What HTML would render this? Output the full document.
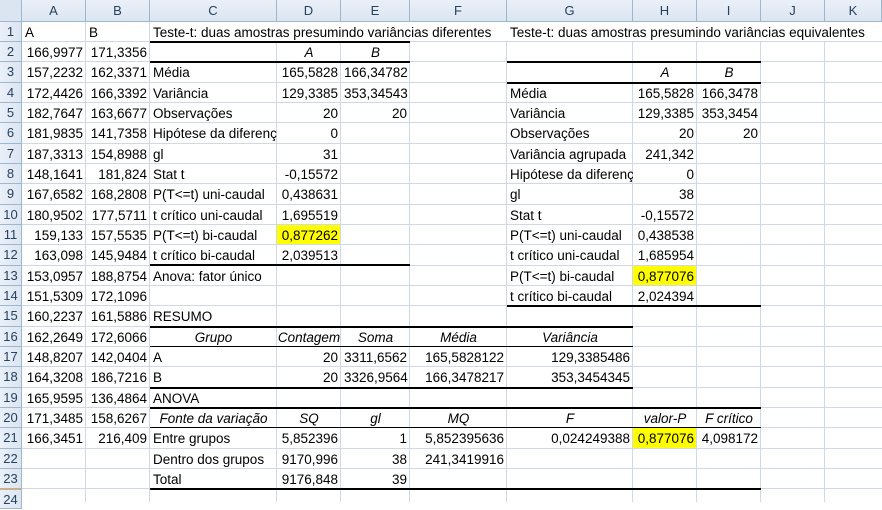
<!DOCTYPE html>
<html><head><meta charset="utf-8"><style>
body{margin:0;width:882px;height:502px;overflow:hidden;background:#fff;position:relative;font-family:"Liberation Sans",sans-serif;font-size:13.5px;color:#000}
div{position:absolute;box-sizing:border-box}
.gv{width:1px;top:0;height:502px;background:#d0d7e5}
.gh{height:1px;left:0;width:882px;background:#d0d7e5}
.hd{top:0;height:22px;background:linear-gradient(#eaf0f9,#dbe5f1);border-right:1px solid #9eb6ce;border-bottom:1px solid #9eb6ce;text-align:center;line-height:22px;color:#27415f;font-size:13px}
.rh{left:0;width:22px;background:linear-gradient(90deg,#eaf0f9,#dbe5f1);border-right:1px solid #9eb6ce;border-bottom:1px solid #9eb6ce;text-align:center;line-height:20px;color:#27415f;font-size:13px}
.c{height:20px;line-height:22px;padding:0 3px;white-space:nowrap;overflow:hidden}
.v{overflow:visible}
.R{text-align:right}.C{text-align:center}.i{font-style:italic}
.y{background:#ffff00;height:19px;margin-top:0}
.tk{height:2px;background:#000}.tn{height:1px;background:#000}
.cA{left:22px;width:64px}.cB{left:86px;width:64px}.cC{left:150px;width:127px}.cD{left:277px;width:64px}.cE{left:341px;width:69px}.cF{left:410px;width:97px}.cG{left:507px;width:126px}.cH{left:633px;width:64px}.cI{left:697px;width:64px}
</style></head><body>
<div class="gv" style="left:21px"></div><div class="gv" style="left:85px"></div><div class="gv" style="left:149px"></div><div class="gv" style="left:276px"></div><div class="gv" style="left:340px"></div><div class="gv" style="left:409px"></div><div class="gv" style="left:506px"></div><div class="gv" style="left:632px"></div><div class="gv" style="left:696px"></div><div class="gv" style="left:760px"></div><div class="gv" style="left:824px"></div>
<div class="gh" style="top:41px"></div><div class="gh" style="top:61px"></div><div class="gh" style="top:82px"></div><div class="gh" style="top:102px"></div><div class="gh" style="top:122px"></div><div class="gh" style="top:143px"></div><div class="gh" style="top:163px"></div><div class="gh" style="top:183px"></div><div class="gh" style="top:204px"></div><div class="gh" style="top:224px"></div><div class="gh" style="top:244px"></div><div class="gh" style="top:265px"></div><div class="gh" style="top:285px"></div><div class="gh" style="top:305px"></div><div class="gh" style="top:326px"></div><div class="gh" style="top:346px"></div><div class="gh" style="top:366px"></div><div class="gh" style="top:387px"></div><div class="gh" style="top:407px"></div><div class="gh" style="top:427px"></div><div class="gh" style="top:448px"></div><div class="gh" style="top:468px"></div><div class="gh" style="top:488px"></div>
<div style="left:150px;top:22px;width:357px;height:19px;background:#fff"></div>
<div style="left:507px;top:22px;width:375px;height:19px;background:#fff"></div>
<div class="hd" style="left:0;width:22px;background:#dbe5f1"></div>
<div class="hd" style="left:22px;width:64px">A</div><div class="hd" style="left:86px;width:64px">B</div><div class="hd" style="left:150px;width:127px">C</div><div class="hd" style="left:277px;width:64px">D</div><div class="hd" style="left:341px;width:69px">E</div><div class="hd" style="left:410px;width:97px">F</div><div class="hd" style="left:507px;width:126px">G</div><div class="hd" style="left:633px;width:64px">H</div><div class="hd" style="left:697px;width:64px">I</div><div class="hd" style="left:761px;width:64px">J</div><div class="hd" style="left:825px;width:57px">K</div>
<div class="rh" style="top:22px;height:20px">1</div><div class="rh" style="top:42px;height:20px">2</div><div class="rh" style="top:62px;height:21px">3</div><div class="rh" style="top:83px;height:20px">4</div><div class="rh" style="top:103px;height:20px">5</div><div class="rh" style="top:123px;height:21px">6</div><div class="rh" style="top:144px;height:20px">7</div><div class="rh" style="top:164px;height:20px">8</div><div class="rh" style="top:184px;height:21px">9</div><div class="rh" style="top:205px;height:20px">10</div><div class="rh" style="top:225px;height:20px">11</div><div class="rh" style="top:245px;height:21px">12</div><div class="rh" style="top:266px;height:20px">13</div><div class="rh" style="top:286px;height:20px">14</div><div class="rh" style="top:306px;height:21px">15</div><div class="rh" style="top:327px;height:20px">16</div><div class="rh" style="top:347px;height:20px">17</div><div class="rh" style="top:367px;height:21px">18</div><div class="rh" style="top:388px;height:20px">19</div><div class="rh" style="top:408px;height:20px">20</div><div class="rh" style="top:428px;height:21px">21</div><div class="rh" style="top:449px;height:20px">22</div><div class="rh" style="top:469px;height:20px">23</div><div class="rh" style="top:489px;height:20px;border-top:1px solid #f2a94a">24</div>
<div class="y" style="left:277px;top:225px;width:63px"></div>
<div class="y" style="left:633px;top:266px;width:63px"></div>
<div class="y" style="left:633px;top:428px;width:63px;height:20px"></div>
<div class="c cA" style="top:22px">A</div><div class="c cB" style="top:22px">B</div>
<div class="c cC v" style="top:22px">Teste-t: duas amostras presumindo variâncias diferentes</div>
<div class="c cG v" style="top:22px">Teste-t: duas amostras presumindo variâncias equivalentes</div>
<div class="c cA R" style="top:42px">166,9977</div><div class="c cB R" style="top:42px">171,3356</div>
<div class="c cD C i" style="top:42px">A</div><div class="c cE C i" style="top:42px">B</div>
<div class="c cA R" style="top:62px">157,2232</div><div class="c cB R" style="top:62px">162,3371</div>
<div class="c cC" style="top:62px">Média</div><div class="c cD R" style="top:62px">165,5828</div><div class="c cE R" style="top:62px">166,34782</div>
<div class="c cH C i" style="top:62px">A</div><div class="c cI C i" style="top:62px">B</div>
<div class="c cA R" style="top:83px">172,4426</div><div class="c cB R" style="top:83px">166,3392</div>
<div class="c cC" style="top:83px">Variância</div><div class="c cD R" style="top:83px">129,3385</div><div class="c cE R" style="top:83px">353,34543</div>
<div class="c cG" style="top:83px">Média</div><div class="c cH R" style="top:83px">165,5828</div><div class="c cI R" style="top:83px">166,3478</div>
<div class="c cA R" style="top:103px">182,7647</div><div class="c cB R" style="top:103px">163,6677</div>
<div class="c cC" style="top:103px">Observações</div><div class="c cD R" style="top:103px">20</div><div class="c cE R" style="top:103px">20</div>
<div class="c cG" style="top:103px">Variância</div><div class="c cH R" style="top:103px">129,3385</div><div class="c cI R" style="top:103px">353,3454</div>
<div class="c cA R" style="top:123px">181,9835</div><div class="c cB R" style="top:123px">141,7358</div>
<div class="c cC" style="top:123px">Hipótese da diferença</div><div class="c cD R" style="top:123px">0</div>
<div class="c cG" style="top:123px">Observações</div><div class="c cH R" style="top:123px">20</div><div class="c cI R" style="top:123px">20</div>
<div class="c cA R" style="top:144px">187,3313</div><div class="c cB R" style="top:144px">154,8988</div>
<div class="c cC" style="top:144px">gl</div><div class="c cD R" style="top:144px">31</div>
<div class="c cG" style="top:144px">Variância agrupada</div><div class="c cH R" style="top:144px">241,342</div>
<div class="c cA R" style="top:164px">148,1641</div><div class="c cB R" style="top:164px">181,824</div>
<div class="c cC" style="top:164px">Stat t</div><div class="c cD R" style="top:164px">-0,15572</div>
<div class="c cG" style="top:164px">Hipótese da diferença</div><div class="c cH R" style="top:164px">0</div>
<div class="c cA R" style="top:184px">167,6582</div><div class="c cB R" style="top:184px">168,2808</div>
<div class="c cC" style="top:184px">P(T&lt;=t) uni-caudal</div><div class="c cD R" style="top:184px">0,438631</div>
<div class="c cG" style="top:184px">gl</div><div class="c cH R" style="top:184px">38</div>
<div class="c cA R" style="top:205px">180,9502</div><div class="c cB R" style="top:205px">177,5711</div>
<div class="c cC" style="top:205px">t crítico uni-caudal</div><div class="c cD R" style="top:205px">1,695519</div>
<div class="c cG" style="top:205px">Stat t</div><div class="c cH R" style="top:205px">-0,15572</div>
<div class="c cA R" style="top:225px">159,133</div><div class="c cB R" style="top:225px">157,5535</div>
<div class="c cC" style="top:225px">P(T&lt;=t) bi-caudal</div><div class="c cD R" style="top:225px">0,877262</div>
<div class="c cG" style="top:225px">P(T&lt;=t) uni-caudal</div><div class="c cH R" style="top:225px">0,438538</div>
<div class="c cA R" style="top:245px">163,098</div><div class="c cB R" style="top:245px">145,9484</div>
<div class="c cC" style="top:245px">t crítico bi-caudal</div><div class="c cD R" style="top:245px">2,039513</div>
<div class="c cG" style="top:245px">t crítico uni-caudal</div><div class="c cH R" style="top:245px">1,685954</div>
<div class="c cA R" style="top:266px">153,0957</div><div class="c cB R" style="top:266px">188,8754</div>
<div class="c cC" style="top:266px">Anova: fator único</div>
<div class="c cG" style="top:266px">P(T&lt;=t) bi-caudal</div><div class="c cH R" style="top:266px">0,877076</div>
<div class="c cA R" style="top:286px">151,5309</div><div class="c cB R" style="top:286px">172,1096</div>
<div class="c cG" style="top:286px">t crítico bi-caudal</div><div class="c cH R" style="top:286px">2,024394</div>
<div class="c cA R" style="top:306px">160,2237</div><div class="c cB R" style="top:306px">161,5886</div>
<div class="c cC" style="top:306px">RESUMO</div>
<div class="c cA R" style="top:327px">162,2649</div><div class="c cB R" style="top:327px">172,6066</div>
<div class="c cC C i" style="top:327px">Grupo</div><div class="c cD C i" style="top:327px;padding:0">Contagem</div><div class="c cE C i" style="top:327px">Soma</div><div class="c cF C i" style="top:327px">Média</div><div class="c cG C i" style="top:327px">Variância</div>
<div class="c cA R" style="top:347px">148,8207</div><div class="c cB R" style="top:347px">142,0404</div>
<div class="c cC" style="top:347px">A</div><div class="c cD R" style="top:347px">20</div><div class="c cE R" style="top:347px">3311,6562</div><div class="c cF R" style="top:347px">165,5828122</div><div class="c cG R" style="top:347px">129,3385486</div>
<div class="c cA R" style="top:367px">164,3208</div><div class="c cB R" style="top:367px">186,7216</div>
<div class="c cC" style="top:367px">B</div><div class="c cD R" style="top:367px">20</div><div class="c cE R" style="top:367px">3326,9564</div><div class="c cF R" style="top:367px">166,3478217</div><div class="c cG R" style="top:367px">353,3454345</div>
<div class="c cA R" style="top:388px">165,9595</div><div class="c cB R" style="top:388px">136,4864</div>
<div class="c cC" style="top:388px">ANOVA</div>
<div class="c cA R" style="top:408px">171,3485</div><div class="c cB R" style="top:408px">158,6267</div>
<div class="c cC C i" style="top:408px">Fonte da variação</div><div class="c cD C i" style="top:408px">SQ</div><div class="c cE C i" style="top:408px">gl</div><div class="c cF C i" style="top:408px">MQ</div><div class="c cG C i" style="top:408px">F</div><div class="c cH C i" style="top:408px">valor-P</div><div class="c cI C i" style="top:408px">F crítico</div>
<div class="c cA R" style="top:428px">166,3451</div><div class="c cB R" style="top:428px">216,409</div>
<div class="c cC" style="top:428px">Entre grupos</div><div class="c cD R" style="top:428px">5,852396</div><div class="c cE R" style="top:428px">1</div><div class="c cF R" style="top:428px">5,852395636</div><div class="c cG R" style="top:428px">0,024249388</div><div class="c cH R" style="top:428px">0,877076</div><div class="c cI R" style="top:428px">4,098172</div>
<div class="c cC" style="top:449px">Dentro dos grupos</div><div class="c cD R" style="top:449px">9170,996</div><div class="c cE R" style="top:449px">38</div><div class="c cF R" style="top:449px">241,3419916</div>
<div class="c cC" style="top:469px">Total</div><div class="c cD R" style="top:469px">9176,848</div><div class="c cE R" style="top:469px">39</div>
<div class="tk" style="left:150px;width:260px;top:41px"></div>
<div class="tk" style="left:150px;width:260px;top:61px"></div>
<div class="tk" style="left:150px;width:260px;top:264px"></div>
<div class="tk" style="left:507px;width:254px;top:61px"></div>
<div class="tk" style="left:507px;width:254px;top:82px"></div>
<div class="tk" style="left:507px;width:254px;top:305px"></div>
<div class="tk" style="left:150px;width:483px;top:326px"></div>
<div class="tn" style="left:150px;width:483px;top:346px"></div>
<div class="tk" style="left:150px;width:483px;top:387px"></div>
<div class="tk" style="left:150px;width:611px;top:407px"></div>
<div class="tn" style="left:150px;width:611px;top:427px"></div>
<div class="tk" style="left:150px;width:611px;top:488px"></div>
</body></html>
